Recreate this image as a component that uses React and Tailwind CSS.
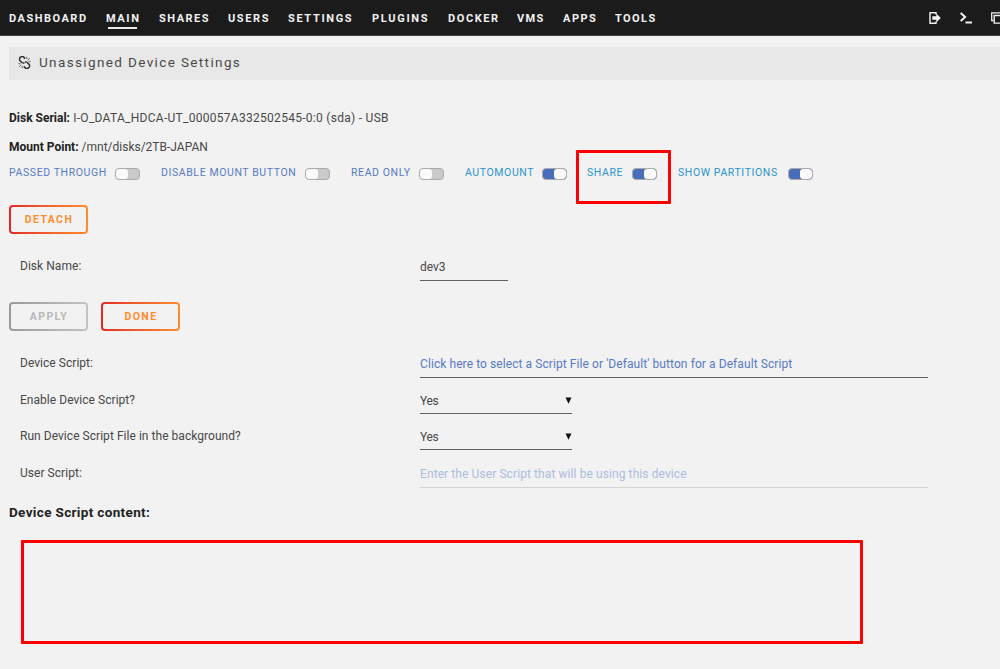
import clsx from "clsx";

const navItems = [
  { label: "Dashboard", className: "w-[97px] tracking-[1.5px]" },
  { label: "Main", className: "w-[53px] tracking-[1.6px]", active: true },
  { label: "Shares", className: "w-[69px] tracking-[1.5px]" },
  { label: "Users", className: "w-[60px] tracking-[1.6px]" },
  { label: "Settings", className: "w-[84px] tracking-[1.65px]" },
  { label: "Plugins", className: "w-[76px] tracking-[1.7px]" },
  { label: "Docker", className: "w-[69px] tracking-[1.6px]" },
  { label: "VMs", className: "w-[46px] tracking-[1.4px]" },
  { label: "Apps", className: "w-[52px] tracking-[1.5px]" },
  { label: "Tools", className: "w-[60px] tracking-[1.4px]" },
];

const switches = [
  { label: "Passed Through", className: "w-[106px]", gap: "mr-[21px]", on: false },
  { label: "Disable Mount Button", className: "w-[144px]", gap: "mr-[21px]", on: false },
  { label: "Read Only", className: "w-[68px]", gap: "mr-[21px]", on: false },
  { label: "Automount", className: "w-[77px]", gap: "mr-[20px]", on: true },
  { label: "Share", className: "w-[45px]", gap: "mr-[21px]", on: true, marked: true },
  { label: "Show Partitions", className: "w-[110px]", gap: "", on: true },
];

const BrokenLinkIcon = () => (
  <svg className="h-[13px] w-[13px]" viewBox="0 0 13 13" fill="none" stroke="#333">
    <path d="M7.2 2.6L6 1.4C5 .4 3.500 .4 2.500 1.200 1.200 2.200 1.200 3.900 2.200 4.900L4 6.500C4.800 7.100 5.700 7.100 6.400 6.600" strokeWidth="1.5" />
    <path d="M5.800 10.400L7 11.600C8 12.600 9.700 12.600 10.800 11.700 12 10.600 11.900 9.100 10.900 8.100L9.200 6.500C8.400 5.900 7.600 5.900 6.900 6.300" strokeWidth="1.5" />
    <path d="M8.800 3.200V.8M9.800 4.200l2-2M10.300 5.300h2.400M.3 7.700h2.400M1.200 10.800l2-2M4.200 12.200V9.800" strokeWidth=".7" />
  </svg>
);

const LogoutIcon = () => (
  <svg className="h-3 w-3" viewBox="0 0 12 12" fill="none" stroke="#f2f2f2">
    <path d="M7 2.500V.8H1v10.400h6V9.500" strokeWidth="1.4" />
    <path d="M3.300 4.200h4V1.600l4.500 4.400-4.500 4.400V7.800h-4z" fill="#f2f2f2" stroke="none" />
  </svg>
);

const TerminalIcon = () => (
  <svg className="h-3 w-3" viewBox="0 0 12 12" fill="none" stroke="#f2f2f2">
    <path d="M.7 1l4.400 4-4.400 4" strokeWidth="2" />
    <path d="M5.500 10.500H12" strokeWidth="2" />
  </svg>
);

const WindowsIcon = () => (
  <svg className="h-3 w-3" viewBox="0 0 12 12" fill="none" stroke="#f2f2f2">
    <path d="M2.500 8.500H.7V.9H11v2" strokeWidth="1.3" />
    <path d="M3.200 3.500H11.300v7.600H3.200z" strokeWidth="1.4" />
  </svg>
);

const Switch = ({ on }) => (
  <span
    className={clsx(
      "flex h-3 w-[25px] shrink-0 overflow-hidden rounded-[4px] border border-[#aaa]",
      on ? "justify-end bg-[#486dba]" : "bg-[#cacaca]"
    )}
  >
    <span className="h-full w-3 rounded-[3px] bg-[#fafafa]" />
  </span>
);

const Button = ({ children, disabled }) => (
  <button
    type="button"
    disabled={disabled}
    className={clsx(
      "h-[29px] w-[79px] rounded-[4px] p-[2px]",
      disabled
        ? "bg-linear-to-r from-[#999] to-[#c4c4c4] text-[#b8b8b8]"
        : "bg-linear-to-r from-[#e22828] to-[#ff8c2f] text-[#ff8c2f]"
    )}
  >
    <span className="flex h-full items-center justify-center rounded-[2px] bg-[#f2f2f2] pl-px text-[10.5px] font-bold tracking-[1.4px] uppercase">
      {children}
    </span>
  </button>
);

const Row = ({ label, children, className }) => (
  <div className={clsx("flex pl-5", className)}>
    <div className="h-5 w-[400px] text-[12px] leading-5 tracking-[0.04px]">{label}</div>
    {children}
  </div>
);

const Select = ({ value }) => (
  <div className="mt-px flex h-[23px] w-[152px] justify-between border-b border-[#606060] leading-5">
    <span className="-tracking-[0.3px]">{value}</span>
    <svg className="mt-1.5 h-[7px] w-[7px]" viewBox="0 0 7 7">
      <path d="M.5 .5h6L3.500 6.800z" fill="#111" />
    </svg>
  </div>
);

export default function App() {
  return (
    <div className="h-[669px] w-[1000px] overflow-hidden bg-[#f2f2f2] font-['Roboto',sans-serif] text-[12px] text-[#484848]">
      <header className="flex h-9 items-start border-b border-[#444] bg-[#1b1b1b] pl-[9px] text-[#f2f2f2]">
        <nav className="flex pt-[10px] text-[11px] leading-[17px] font-bold uppercase">
          {navItems.map((item) => (
            <a key={item.label} className={clsx("block shrink-0 whitespace-nowrap", item.className)}>
              {item.label}
              {item.active && <span className="ml-0.5 block h-[2px] w-[29px] bg-[#e8e8e8]" />}
            </a>
          ))}
        </nav>
        <div className="ml-auto flex w-[71px] gap-[19px] overflow-hidden pt-3 [&>svg]:shrink-0">
          <LogoutIcon />
          <TerminalIcon />
          <WindowsIcon />
        </div>
      </header>

      <main>
        <div className="mt-[11px] ml-[9px] flex h-[33px] items-center bg-[#e8e8e8] pb-[2px] pl-[9px]">
          <BrokenLinkIcon />
          <h1 className="ml-2 text-[13.5px] tracking-[1.37px]">Unassigned Device Settings</h1>
        </div>

        <div className="mt-7 ml-[9px] leading-5">
          <p className="tracking-[0.28px]">
            <b className="tracking-normal text-[#222]">Disk Serial:</b> I-O_DATA_HDCA-UT_000057A332502545-0:0 (sda) - USB
          </p>
          <p className="mt-[9px]">
            <b className="text-[#222]">Mount Point:</b> /mnt/disks/2TB-JAPAN
          </p>
        </div>

        <div className="mt-[7px] ml-[9px] flex h-5 text-[10.5px] leading-5 tracking-[0.6px] uppercase">
          {switches.map((item) => (
            <div key={item.label} className={clsx("relative flex shrink-0 items-center", item.gap)}>
              <span
                className={clsx(
                  "-mt-0.5 shrink-0 whitespace-nowrap",
                  item.className,
                  item.on ? "text-[#2b93cf]" : "text-[#587ac6]"
                )}
              >
                {item.label}
              </span>
              <Switch on={item.on} />
              {item.marked && (
                <span className="absolute -top-[14px] -left-[11px] h-[54px] w-[95px] rounded-[1px] border-3 border-[#fe0000]" />
              )}
            </div>
          ))}
        </div>

        <div className="mt-[21px] ml-[9px] flex">
          <Button>Detach</Button>
        </div>

        <Row label="Disk Name:" className="mt-[22px]">
          <div className="mt-px h-6 w-[88px] border-b border-[#606060] leading-5">dev3</div>
        </Row>

        <div className="mt-[21px] ml-[9px] flex gap-[13px]">
          <Button disabled>Apply</Button>
          <Button>Done</Button>
        </div>

        <Row label="Device Script:" className="mt-[22px]">
          <div className="mt-px h-6 w-[508px] border-b border-[#606060] leading-5 tracking-[0.08px] text-[#587ac6]">
            Click here to select a Script File or 'Default' button for a Default Script
          </div>
        </Row>
        <Row label="Enable Device Script?" className="mt-[12px]">
          <Select value="Yes" />
        </Row>
        <Row label="Run Device Script File in the background?" className="mt-[12px]">
          <Select value="Yes" />
        </Row>
        <Row label="User Script:" className="mt-[13px]">
          <div className="mt-px h-6 w-[508px] border-b border-[#d4d4d4] leading-5 tracking-[0.09px] text-[#adbce0]">
            Enter the User Script that will be using this device
          </div>
        </Row>

        <h2 className="mt-[14px] ml-[9px] text-[13.5px] leading-5 font-bold tracking-[0.35px] text-[#222]">
          Device Script content:
        </h2>
        <div className="mt-[18px] ml-[21px] h-[104px] w-[842px] rounded-[1px] border-3 border-[#fe0000]" />
      </main>
    </div>
  );
}
